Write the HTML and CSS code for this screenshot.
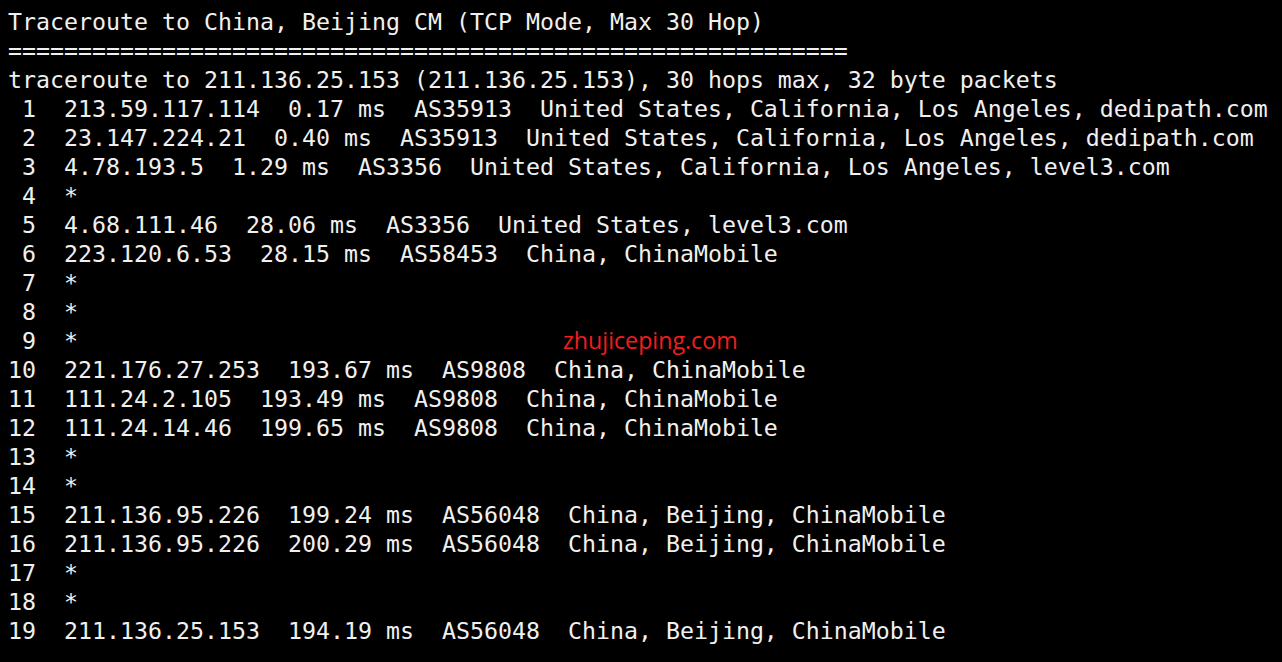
FILE: index.html
```html
<!DOCTYPE html>
<html lang="en">
<head>
  <meta charset="UTF-8">
  <title>Traceroute to China, Beijing CM</title>
  <link rel="stylesheet" href="styles.css">
</head>
<body>
  <div class="terminal">
<pre class="output">Traceroute to China, Beijing CM (TCP Mode, Max 30 Hop)
============================================================
traceroute to 211.136.25.153 (211.136.25.153), 30 hops max, 32 byte packets
 1  213.59.117.114  0.17 ms  AS35913  United States, California, Los Angeles, dedipath.com
 2  23.147.224.21  0.40 ms  AS35913  United States, California, Los Angeles, dedipath.com
 3  4.78.193.5  1.29 ms  AS3356  United States, California, Los Angeles, level3.com
 4  *
 5  4.68.111.46  28.06 ms  AS3356  United States, level3.com
 6  223.120.6.53  28.15 ms  AS58453  China, ChinaMobile
 7  *
 8  *
 9  *<span class="watermark">zhujiceping.com</span>
10  221.176.27.253  193.67 ms  AS9808  China, ChinaMobile
11  111.24.2.105  193.49 ms  AS9808  China, ChinaMobile
12  111.24.14.46  199.65 ms  AS9808  China, ChinaMobile
13  *
14  *
15  211.136.95.226  199.24 ms  AS56048  China, Beijing, ChinaMobile
16  211.136.95.226  200.29 ms  AS56048  China, Beijing, ChinaMobile
17  *
18  *
19  211.136.25.153  194.19 ms  AS56048  China, Beijing, ChinaMobile</pre>
  </div>
</body>
</html>
```

FILE: styles.css
```css
/* Terminal screen */
html, body {
  margin: 0;
  padding: 0;
  background-color: #000;
}

.terminal {
  width: 1282px;
  height: 662px;
  overflow: hidden;
  background-color: #000;
}

.output {
  margin: 0;
  padding: 7px 0 0 8px;
  font-family: "DejaVu Sans Mono", monospace;
  font-size: 23.26px;
  line-height: 29px;
  color: #f0f0f0;
  white-space: pre;
}

/* Site watermark, sits on the row of hop 9 */
.watermark {
  margin-left: 485px;
  font-family: "Open Sans", sans-serif;
  font-size: 23.2px;
  line-height: 20px;
  color: #f01e1e;
}
```
